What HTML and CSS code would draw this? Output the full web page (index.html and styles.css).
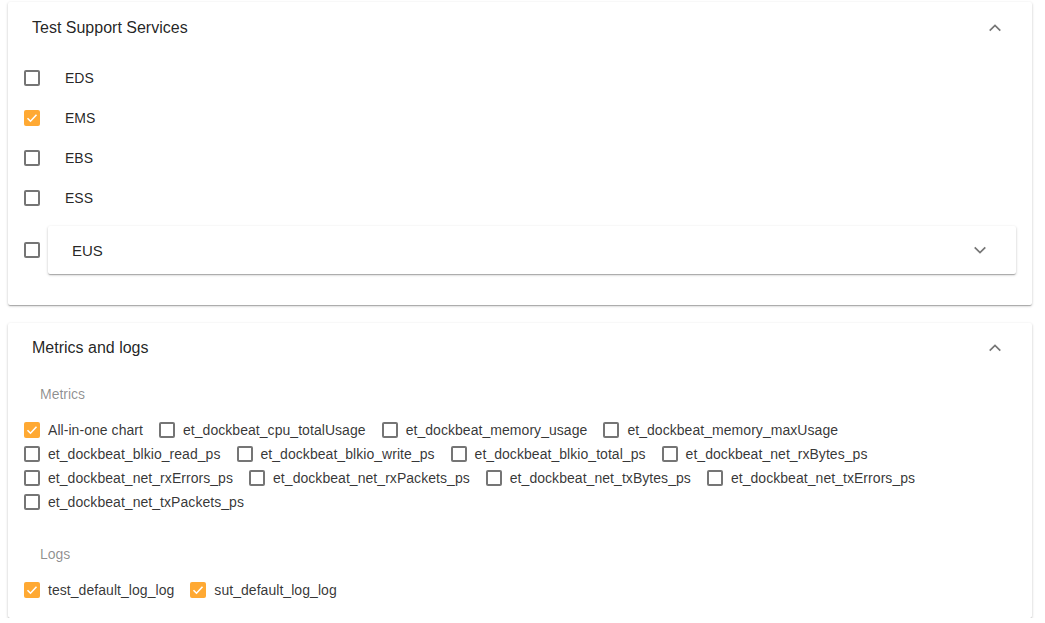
FILE: index.html
```html
<!DOCTYPE html>
<html>
<head>
<meta charset="utf-8">
<link rel="stylesheet" href="styles.css">
</head>
<body>
<div class="page">
  <section class="card">
    <header class="card-header">
      <span class="card-title">Test Support Services</span>
      <svg class="chev" width="24" height="24" viewBox="0 0 24 24"><path d="M6.7 14.7L12 9.4l5.3 5.3" fill="none" stroke="currentColor" stroke-width="1.7"/></svg>
    </header>
    <div class="services">
      <div class="svc-row"><span class="cb"></span><span class="svc-label">EDS</span></div>
      <div class="svc-row"><span class="cb checked"><svg viewBox="0 0 16 16" width="16" height="16"><path d="M3.5 8.2l3 3 6-6.4" fill="none" stroke="#fff" stroke-width="1.6"/></svg></span><span class="svc-label">EMS</span></div>
      <div class="svc-row"><span class="cb"></span><span class="svc-label">EBS</span></div>
      <div class="svc-row"><span class="cb"></span><span class="svc-label">ESS</span></div>
      <div class="svc-row nested-row">
        <span class="cb"></span>
        <div class="sub-panel">
          <span class="sub-title">EUS</span>
          <svg class="chev" width="24" height="24" viewBox="0 0 24 24"><path d="M6.7 9.3L12 14.6l5.3-5.3" fill="none" stroke="currentColor" stroke-width="1.7"/></svg>
        </div>
      </div>
    </div>
  </section>

  <section class="card">
    <header class="card-header">
      <span class="card-title">Metrics and logs</span>
      <svg class="chev" width="24" height="24" viewBox="0 0 24 24"><path d="M6.7 14.7L12 9.4l5.3 5.3" fill="none" stroke="currentColor" stroke-width="1.7"/></svg>
    </header>
    <div class="metrics">
      <div class="sub-label">Metrics</div>
      <div class="opts">
        <label class="opt"><span class="cb checked"><svg viewBox="0 0 16 16" width="16" height="16"><path d="M3.5 8.2l3 3 6-6.4" fill="none" stroke="#fff" stroke-width="1.6"/></svg></span>All-in-one chart</label>
        <label class="opt"><span class="cb"></span>et_dockbeat_cpu_totalUsage</label>
        <label class="opt"><span class="cb"></span>et_dockbeat_memory_usage</label>
        <label class="opt"><span class="cb"></span>et_dockbeat_memory_maxUsage</label>
        <label class="opt"><span class="cb"></span>et_dockbeat_blkio_read_ps</label>
        <label class="opt"><span class="cb"></span>et_dockbeat_blkio_write_ps</label>
        <label class="opt"><span class="cb"></span>et_dockbeat_blkio_total_ps</label>
        <label class="opt"><span class="cb"></span>et_dockbeat_net_rxBytes_ps</label>
        <label class="opt"><span class="cb"></span>et_dockbeat_net_rxErrors_ps</label>
        <label class="opt"><span class="cb"></span>et_dockbeat_net_rxPackets_ps</label>
        <label class="opt"><span class="cb"></span>et_dockbeat_net_txBytes_ps</label>
        <label class="opt"><span class="cb"></span>et_dockbeat_net_txErrors_ps</label>
        <label class="opt"><span class="cb"></span>et_dockbeat_net_txPackets_ps</label>
      </div>
      <div class="sub-label logs-label">Logs</div>
      <div class="opts">
        <label class="opt"><span class="cb checked"><svg viewBox="0 0 16 16" width="16" height="16"><path d="M3.5 8.2l3 3 6-6.4" fill="none" stroke="#fff" stroke-width="1.6"/></svg></span>test_default_log_log</label>
        <label class="opt"><span class="cb checked"><svg viewBox="0 0 16 16" width="16" height="16"><path d="M3.5 8.2l3 3 6-6.4" fill="none" stroke="#fff" stroke-width="1.6"/></svg></span>sut_default_log_log</label>
      </div>
    </div>
  </section>
</div>
</body>
</html>
```

FILE: styles.css
```css
* { box-sizing: border-box; }
html, body { margin: 0; padding: 0; background: #fff; }
body {
  font-family: "Liberation Sans", Arial, sans-serif;
  color: rgba(0,0,0,0.87);
}
.page {
  padding: 2px 13px 0 8px;
  display: flex;
  flex-direction: column;
  gap: 18px;
}
.card {
  background: #fff;
  border-radius: 2px;
  box-shadow: 0 1px 3px rgba(0,0,0,0.2), 0 1px 1px rgba(0,0,0,0.14), 0 2px 1px -1px rgba(0,0,0,0.12);
}
.card-header {
  height: 50px;
  display: flex;
  align-items: center;
  justify-content: space-between;
  padding: 0 25px 0 24px;
}
.card:first-child .card-header { height: 51px; }
.card-title { font-size: 16px; }
.chev { color: rgba(0,0,0,0.54); display: block; }

.services { padding: 5px 16px 31px 16px; }
.svc-row {
  height: 40px;
  display: flex;
  align-items: center;
  gap: 25px;
}
.svc-label { font-size: 14px; }
.nested-row {
  height: 48px;
  margin-top: 8px;
  gap: 8px;
}
.sub-panel {
  flex: 1;
  height: 48px;
  display: flex;
  align-items: center;
  justify-content: space-between;
  padding: 0 24px 0 24px;
  background: #fff;
  border-radius: 2px;
  box-shadow: 0 1px 3px rgba(0,0,0,0.2), 0 1px 1px rgba(0,0,0,0.14), 0 2px 1px -1px rgba(0,0,0,0.12);
}
.sub-title { font-size: 15px; }

.cb {
  width: 16px;
  height: 16px;
  flex: none;
  border: 2px solid rgba(0,0,0,0.54);
  border-radius: 2px;
  display: inline-flex;
  align-items: center;
  justify-content: center;
  background: #fff;
}
.cb.checked {
  border: none;
  background: #ffa933;
}
.cb svg { display: block; }

.metrics { padding: 9px 16px 16px 16px; }
.sub-label {
  font-size: 14px;
  color: rgba(0,0,0,0.45);
  height: 24px;
  line-height: 24px;
  padding-left: 16px;
  margin-bottom: 12px;
}
.logs-label { margin-top: 28px; }
.opts {
  display: flex;
  flex-wrap: wrap;
  padding-right: 10px;
}
.opt {
  display: flex;
  align-items: center;
  gap: 8px;
  height: 24px;
  font-size: 14px;
  margin-right: 16px;
  color: rgba(0,0,0,0.8);
  letter-spacing: 0.05px;
}
```
